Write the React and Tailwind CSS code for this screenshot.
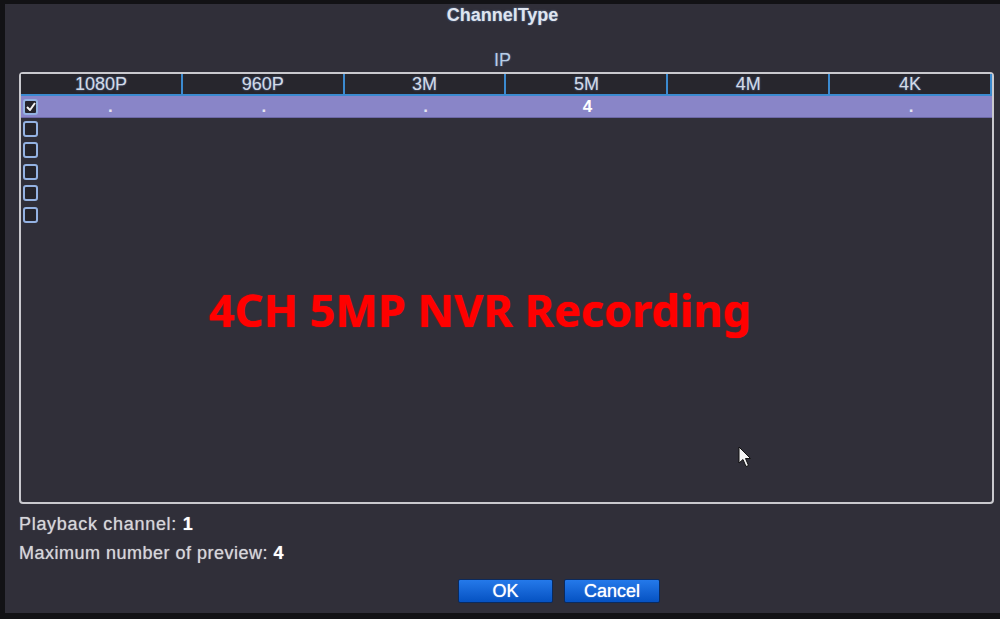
import React from "react";

const cols = ["1080P", "960P", "3M", "5M", "4M", "4K"];

function Box({ checked }) {
  return (
    <div className="w-[15px] h-[16px] border-2 border-[#94b2e2] rounded-[3px] bg-[#25242b] flex items-center justify-center">
      {checked && (
        <svg width="10" height="9" viewBox="0 0 10 9">
          <path d="M1 5 L4 8 L9 1" fill="none" stroke="#f2f2f2" strokeWidth="2" />
        </svg>
      )}
    </div>
  );
}

export default function App() {
  return (
    <div className="relative w-[1000px] h-[619px] overflow-hidden bg-[#121215] pt-[4px] pl-[5px] pb-[6px] font-['Liberation_Sans',Arial,sans-serif]">
      <div className="h-full bg-[#302f39] flex flex-col">
        <div className="h-[22px] flex items-center justify-center text-[18px] font-bold text-[#dfe5ef] [text-shadow:0_0_2px_rgba(130,170,230,0.7)]">
          ChannelType
        </div>
        <div className="mt-[24px] h-[20px] leading-[20px] text-center text-[18px] text-[#b9cde4] [text-shadow:0_0_2px_rgba(110,160,230,0.6)]">
          IP
        </div>
        <div className="mt-[2px] ml-[14px] w-[975px] h-[432px] border-2 border-[#c9c9ce] rounded-[4px] flex flex-col">
          <div className="h-[22px] grid grid-cols-6 bg-[#27262d] border-b-2 border-[#3b8ad0]">
            {cols.map((c) => (
              <div
                key={c}
                className="border-r-2 border-[#3b8ad0] flex items-center justify-center text-[18px] leading-none text-[#d3dae6] [text-shadow:0_0_2px_rgba(120,165,230,0.7)]"
              >
                {c}
              </div>
            ))}
          </div>
          <div className="h-[22px] grid grid-cols-6 bg-[#8985c8] border-b border-[#6c68a6] text-[17px] leading-none font-bold text-white">
            <div className="flex items-center pl-[2px]">
              <Box checked />
              <div className="flex-1 text-center text-[#e6e6f2]">.</div>
            </div>
            <div className="flex items-center justify-center text-[#e6e6f2]">.</div>
            <div className="flex items-center justify-center text-[#e6e6f2]">.</div>
            <div className="flex items-center justify-center">4</div>
            <div></div>
            <div className="flex items-center justify-center text-[#e6e6f2]">.</div>
          </div>
          {[0, 1, 2, 3, 4].map((i) => (
            <div key={i} className="h-[21.5px] flex items-center pl-[2px]">
              <Box />
            </div>
          ))}
          <div className="flex-1 pt-[61px] pl-[188px]">
            <div className="text-[45px] leading-none font-bold text-[#ff0000] font-['Noto_Sans',sans-serif] [text-shadow:0_0_1px_#ff0000]">
              4CH 5MP NVR Recording
            </div>
          </div>
        </div>
        <div className="mt-[10px] ml-[14px] h-[20px] leading-[20px] text-[18px] tracking-[0.7px] text-[#d6d6da] [text-shadow:0_0_1px_rgba(255,255,255,0.6)]">
          Playback channel: <span className="font-bold text-white">1</span>
        </div>
        <div className="mt-[9px] ml-[14px] h-[20px] leading-[20px] text-[18px] tracking-[0.5px] text-[#d6d6da] [text-shadow:0_0_1px_rgba(255,255,255,0.6)]">
          Maximum number of preview: <span className="font-bold text-white">4</span>
        </div>
        <div className="mt-[16px] ml-[453px] flex gap-[11px]">
          <button className="w-[95px] h-[24px] rounded-[2px] border border-[#0a2a5e] bg-gradient-to-b from-[#2479ea] to-[#0552c2] text-[18px] leading-none text-white [text-shadow:0_0_1px_rgba(255,255,255,0.9)]">
            OK
          </button>
          <button className="w-[96px] h-[24px] rounded-[2px] border border-[#0a2a5e] bg-gradient-to-b from-[#2479ea] to-[#0552c2] text-[18px] leading-none text-white [text-shadow:0_0_1px_rgba(255,255,255,0.9)]">
            Cancel
          </button>
        </div>
      </div>
      <svg className="absolute left-[738px] top-[446px]" width="15" height="23" viewBox="0 0 15 23">
        <path d="M1 1 L1 17 L5 13.5 L8 20.5 L10.5 19.5 L7.5 12.5 L12.5 12.5 Z" fill="#f4f4f4" stroke="#111" strokeWidth="1" strokeLinejoin="round" />
      </svg>
    </div>
  );
}
